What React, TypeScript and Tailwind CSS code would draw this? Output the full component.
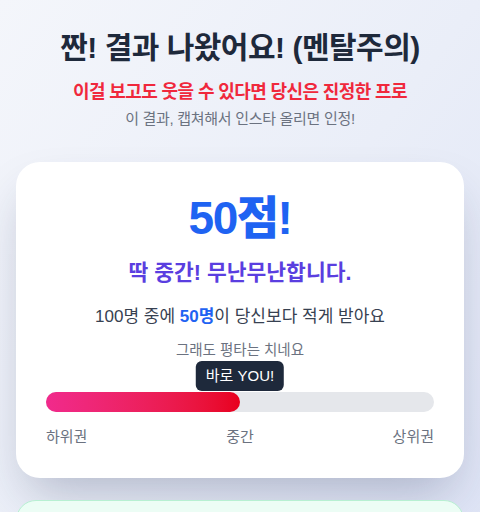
import React from "react";

export default function App() {
  return (
    <div
      className="min-h-[512px] w-full bg-gradient-to-br from-[#f4f6fb] via-[#eaeef8] to-[#dde3f6] px-4 pt-[30px] pb-8"
      style={{ fontFamily: '"Liberation Sans", "Noto Sans CJK KR", sans-serif' }}
    >
      <div className="text-center">
        <h1 className="text-[30px] leading-[36px] font-bold text-[#1e293b] tracking-[-0.5px]">
          짠! 결과 나왔어요! (멘탈주의)
        </h1>
        <p className="mt-3 text-[18px] leading-[28px] font-bold text-[#f0283c] tracking-[-0.6px]">
          이걸 보고도 웃을 수 있다면 당신은 진정한 프로
        </p>
        <p className="mt-[2px] text-[15px] leading-[22px] text-[#6b7280] tracking-[-0.3px]">
          이 결과, 캡쳐해서 인스타 올리면 인정!
        </p>
      </div>

      <div className="mt-8 rounded-[24px] bg-white px-[30px] pt-8 pb-[30px] shadow-[0_25px_50px_-12px_rgba(30,41,80,0.28)] text-center">
        <div className="text-[46px] leading-[48px] font-extrabold text-[#1f63f2] tracking-[-1.5px]">50점!</div>
        <div className="mt-[17px] text-[21.5px] leading-[28px] font-bold text-[#5a3ee0]">
          딱 중간! 무난무난합니다.
        </div>
        <div className="mt-[17px] text-[17px] leading-[26px] text-[#374151]">
          100명 중에 <span className="font-bold text-[#1f63f2]">50명</span>이 당신보다 적게 받아요
        </div>
        <div className="mt-[10px] text-[14.5px] leading-[20px] text-[#6b7280]">그래도 평타는 치네요</div>

        <div className="relative mt-8 h-5 rounded-full bg-[#e5e7eb]">
          <div
            className="h-5 rounded-full bg-gradient-to-r from-[#f12a8c] to-[#e8001c]"
            style={{ width: "50%" }}
          />
          <div className="absolute bottom-full left-1/2 -translate-x-1/2 mb-[1px] rounded-md bg-[#1e293b] px-[10px] h-[30px] flex items-center text-[15px] text-white whitespace-nowrap">
            바로 YOU!
          </div>
        </div>

        <div className="mt-[14px] flex justify-between text-[15px] leading-[22px] text-[#6b7280]">
          <span>하위권</span>
          <span>중간</span>
          <span>상위권</span>
        </div>
      </div>

      <div className="mt-[22px] h-24 rounded-[20px] border border-[#b7f0d2] bg-[#ecfdf5]" />
    </div>
  );
}
